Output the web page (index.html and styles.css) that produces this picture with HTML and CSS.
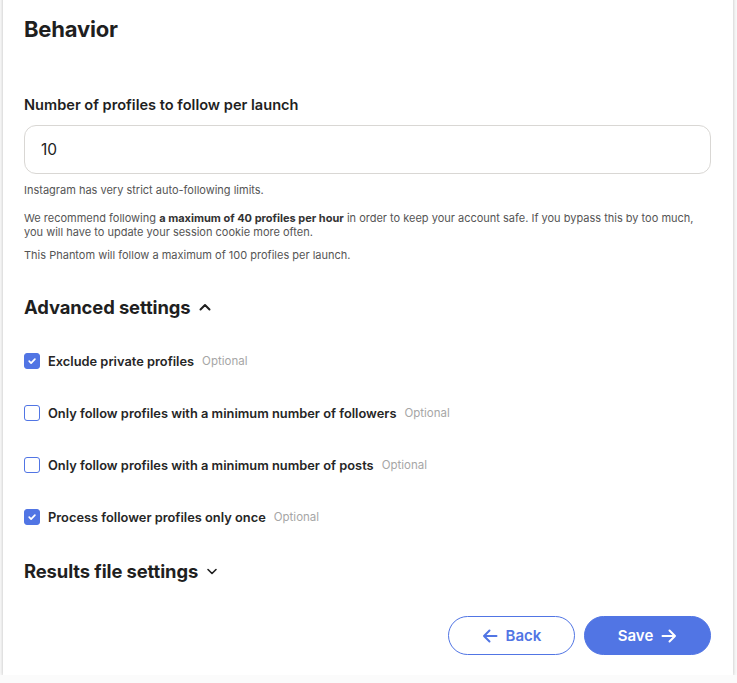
FILE: index.html
```html
<!DOCTYPE html>
<html>
<head>
<meta charset="utf-8">
<link rel="stylesheet" href="styles.css">
</head>
<body>
<div class="card">
  <h2 class="title">Behavior</h2>

  <div class="field">
    <label class="label">Number of profiles to follow per launch</label>
    <div class="input">10</div>
    <p class="help h1">Instagram has very strict auto-following limits.</p>
    <div class="help h2">
      <div class="line">We recommend following <b>a maximum of 40 profiles per hour</b> in order to keep your account safe. If you bypass this by too much,</div>
      <div class="line">you will have to update your session cookie more often.</div>
    </div>
    <p class="help h3">This Phantom will follow a maximum of 100 profiles per launch.</p>
  </div>

  <h3 class="section">Advanced settings
    <svg class="chev" width="14" height="14" viewBox="0 0 14 14"><path d="M2.5 9.5L7 5l4.5 4.5" fill="none" stroke="#1f1f1f" stroke-width="2" stroke-linecap="round" stroke-linejoin="round"/></svg>
  </h3>

  <div class="checks">
    <div class="check">
      <span class="box on"><svg width="10" height="10" viewBox="0 0 10 10"><path d="M2.2 5.2l1.9 1.9 3.8-4" fill="none" stroke="#fff" stroke-width="1.7" stroke-linecap="round" stroke-linejoin="round"/></svg></span>
      <span class="ctext">Exclude private profiles</span><span class="opt">Optional</span>
    </div>
    <div class="check">
      <span class="box"></span>
      <span class="ctext">Only follow profiles with a minimum number of followers</span><span class="opt">Optional</span>
    </div>
    <div class="check">
      <span class="box"></span>
      <span class="ctext">Only follow profiles with a minimum number of posts</span><span class="opt">Optional</span>
    </div>
    <div class="check">
      <span class="box on"><svg width="10" height="10" viewBox="0 0 10 10"><path d="M2.2 5.2l1.9 1.9 3.8-4" fill="none" stroke="#fff" stroke-width="1.7" stroke-linecap="round" stroke-linejoin="round"/></svg></span>
      <span class="ctext">Process follower profiles only once</span><span class="opt">Optional</span>
    </div>
  </div>

  <h3 class="section results">Results file settings
    <svg class="chev" width="14" height="14" viewBox="0 0 14 14"><path d="M3 5.5L7 9.5l4-4" fill="none" stroke="#1f1f1f" stroke-width="1.6" stroke-linecap="round" stroke-linejoin="round"/></svg>
  </h3>

  <div class="actions">
    <button class="btn back"><svg width="16" height="14" viewBox="0 0 16 14"><path d="M14.5 7H2M7.5 1.5L2 7l5.5 5.5" fill="none" stroke="#5175e4" stroke-width="2" stroke-linecap="round" stroke-linejoin="round"/></svg>Back</button>
    <button class="btn save">Save<svg width="16" height="14" viewBox="0 0 16 14"><path d="M1.5 7H14M8.5 1.5L14 7l-5.5 5.5" fill="none" stroke="#fff" stroke-width="2" stroke-linecap="round" stroke-linejoin="round"/></svg></button>
  </div>
</div>
</body>
</html>
```
FILE: styles.css
```css
* { box-sizing: border-box; }
html, body { margin: 0; padding: 0; background: #fbfbfb; }
body {
  font-family: "Inter", "Liberation Sans", sans-serif;
  color: #1f1f1f;
  padding: 0 4px 0 3px;
}
.card {
  width: 730px;
  height: 685px;
  margin-top: -10px;
  background: #fff;
  box-shadow: 0 1px 4px rgba(0,0,0,0.25);
  padding: 26px 22px 0 21px;
  display: flex;
  flex-direction: column;
}
.title {
  margin: 0;
  font-size: 22px;
  font-weight: 700;
  line-height: 26px;
  letter-spacing: -0.2px;
}
.field { margin-top: 54px; }
.label {
  display: block;
  font-size: 14.6px;
  font-weight: 600;
  line-height: 18px;
}
.input {
  margin-top: 11px;
  height: 49px;
  border: 1px solid #d9d7d4;
  border-radius: 12px;
  padding: 0 16px;
  display: flex;
  align-items: center;
  font-size: 15.5px;
  color: #222;
}
.help {
  margin: 0;
  font-size: 11px;
  line-height: 14px;
  color: #555;
}
.help .line { white-space: nowrap; }
.help.h1 { margin-top: 9px; }
.help.h2 { margin-top: 14px; }
.help.h3 { margin-top: 9px; }
.help b { font-weight: 700; color: #333; }
.section {
  margin: 33px 0 0;
  font-size: 18.4px;
  font-weight: 700;
  line-height: 24px;
  display: flex;
  align-items: center;
  gap: 7px;
  letter-spacing: -0.1px;
}
.checks {
  margin-top: 34px;
  display: flex;
  flex-direction: column;
  gap: 36px;
}
.check {
  display: flex;
  align-items: center;
  height: 16px;
}
.box {
  width: 16px;
  height: 16px;
  border: 1.5px solid #5175e4;
  border-radius: 3px;
  display: inline-flex;
  align-items: center;
  justify-content: center;
  margin-right: 8px;
  flex: none;
}
.box.on { background: #5175e4; }
.ctext {
  font-size: 12.85px;
  font-weight: 600;
  color: #262626;
}
.opt {
  margin-left: 8px;
  font-size: 11.5px;
  color: #a6a6a6;
}
.results { margin-top: 34px; }
.actions {
  margin-top: 33px;
  display: flex;
  justify-content: flex-end;
  gap: 9px;
}
.btn {
  width: 127px;
  height: 39px;
  border-radius: 20px;
  font-family: inherit;
  font-size: 15px;
  font-weight: 600;
  display: flex;
  align-items: center;
  justify-content: center;
  gap: 8px;
  cursor: pointer;
}
.back {
  background: #fff;
  border: 1px solid #5175e4;
  color: #5175e4;
}
.save {
  background: #5175e4;
  border: 1px solid #5175e4;
  color: #fff;
}
```
